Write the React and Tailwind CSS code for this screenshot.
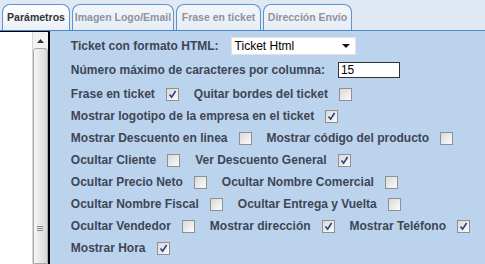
import React from "react";

const tabs = [
  { label: "Parámetros", w: "w-[68px]", active: true },
  { label: "Imagen Logo/Email", w: "w-[102px]" },
  { label: "Frase en ticket", w: "w-[85px]" },
  { label: "Dirección Envío", w: "w-[89px]" }
];

// each row: list of [label, checked]
const rows = [
  [["Frase en ticket", true], ["Quitar bordes del ticket", false]],
  [["Mostrar logotipo de la empresa en el ticket", true]],
  [["Mostrar Descuento en linea", false], ["Mostrar código del producto", false]],
  [["Ocultar Cliente", false], ["Ver Descuento General", true]],
  [["Ocultar Precio Neto", false], ["Ocultar Nombre Comercial", false]],
  [["Ocultar Nombre Fiscal", false], ["Ocultar Entrega y Vuelta", false]],
  [["Ocultar Vendedor", false], ["Mostrar dirección", true], ["Mostrar Teléfono", true]],
  [["Mostrar Hora", true]]
];

function Check({ checked }) {
  return (
    <span className="ml-[11px] mr-[15px] flex h-[13px] w-[13px] shrink-0 items-center justify-center border border-[#8e8f8f] bg-linear-to-br from-[#d9d9d9] to-[#fbfbfb]">
      {checked && (
        <svg width="9" height="9" viewBox="0 0 9 9">
          <path d="M1.5 4.5 L3.6 7.2 L7.6 1" fill="none" stroke="#2c3c8e" strokeWidth="1.6" />
        </svg>
      )}
    </span>
  );
}

export default function App() {
  return (
    <div className="h-[264px] w-[485px] overflow-hidden bg-[#bcd3ee] font-['Liberation_Sans',Arial,sans-serif]">
      <div className="flex h-[31px] items-end gap-[2px] border-b border-[#4a86c8] bg-[#dfe8f3] pl-[2px]">
        {tabs.map(t => (
          <div
            key={t.label}
            className={
              t.w +
              " flex h-[26px] items-center justify-center whitespace-nowrap rounded-t-[8px] border border-b-0 border-[#5b93d3] text-[10.5px] font-bold " +
              (t.active
                ? "bg-linear-to-b from-white to-[#eaf0f8] text-[#333]"
                : "bg-linear-to-b from-[#f3f6fa] to-[#e6edf6] text-[#8d949c]")
            }
          >
            {t.label}
          </div>
        ))}
      </div>
      <div className="flex h-[233px]">
        <div className="flex w-[56px] border-t border-r-2 border-black bg-white">
          <div className="flex-1" />
          <div className="flex w-[16px] flex-col border-l border-[#d6d6d6] bg-[#f2f2f2]">
            <div className="flex h-[16px] items-center justify-center pt-[2px]">
              <svg width="7" height="4" viewBox="0 0 7 4">
                <path d="M0 4 L3.5 0 L7 4 Z" fill="#333" />
              </svg>
            </div>
            <div className="flex flex-1 flex-col items-center rounded-t-[3px] border border-[#a9a9a9] bg-linear-to-r from-[#f6f6f6] to-[#d8d8d8] pt-[177px]">
              <div className="flex flex-col gap-[1px]">
                <span className="h-[1px] w-[6px] bg-[#888]" />
                <span className="h-[1px] w-[6px] bg-[#888]" />
                <span className="h-[1px] w-[6px] bg-[#888]" />
              </div>
            </div>
          </div>
        </div>
        <div className="flex flex-1 flex-col pl-[21px] pt-[4px] text-[12px] font-bold text-[#3d4654]">
          <div className="mb-[2px] flex h-[22px] items-center">
            <span>Ticket con formato HTML:</span>
            <div className="ml-[12px] flex h-[18px] w-[125px] items-center justify-between border border-[#e2e2e2] bg-white pl-[3px] pr-[5px] font-normal text-black">
              <span>Ticket Html</span>
              <svg width="8" height="4" viewBox="0 0 8 4">
                <path d="M0 0 L8 0 L4 4 Z" fill="#111" />
              </svg>
            </div>
          </div>
          <div className="mb-[2px] flex h-[22px] items-center">
            <span>Número máximo de caracteres por columna:</span>
            <div className="ml-[13px] flex h-[16px] w-[62px] items-center border border-[#333] bg-white pl-[2px] font-normal text-black">
              15
            </div>
          </div>
          {rows.map((row, i) => (
            <div key={i} className="flex h-[22px] items-center">
              {row.map(([label, checked]) => (
                <React.Fragment key={label}>
                  <span className="whitespace-nowrap">{label}</span>
                  <Check checked={checked} />
                </React.Fragment>
              ))}
            </div>
          ))}
        </div>
      </div>
    </div>
  );
}
